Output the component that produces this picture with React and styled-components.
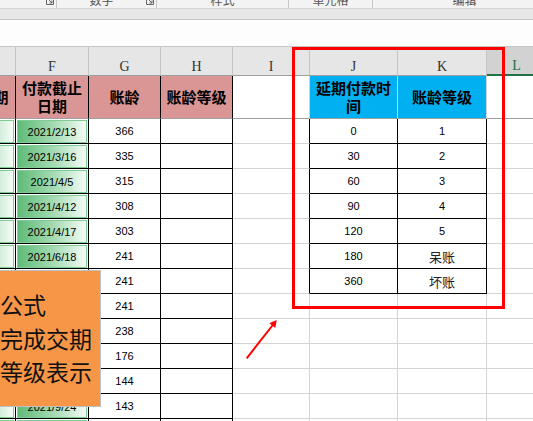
import React from "react";
import styled, { createGlobalStyle } from "styled-components";

const GlobalStyle = createGlobalStyle`
  html, body {
    margin: 0;
    padding: 0;
    background: #fff;
    overflow: hidden;
  }
`;

const GROUPS = [
  { label: "对齐方式", width: 177, launcher: true },
  { label: "数字", width: 100, launcher: true },
  { label: "样式", width: 132 },
  { label: "单元格", width: 84 },
  { label: "编辑", width: 184 },
];

const COLUMNS = [
  { key: "E", width: 74 },
  { key: "F", width: 73 },
  { key: "G", width: 72 },
  { key: "H", width: 72 },
  { key: "I", width: 77 },
  { key: "J", width: 88 },
  { key: "K", width: 89 },
  { key: "L", width: 60 },
];

// rows under the orange note keep no visible date
const ROWS = [
  { date: "2021/2/13", age: 366 },
  { date: "2021/3/16", age: 335 },
  { date: "2021/4/5", age: 315 },
  { date: "2021/4/12", age: 308 },
  { date: "2021/4/17", age: 303 },
  { date: "2021/6/18", age: 241 },
  { date: "", age: 241 },
  { date: "", age: 241 },
  { date: "", age: 238 },
  { date: "", age: 176 },
  { date: "", age: 144 },
  { date: "2021/9/24", age: 143 },
  { date: "2021/9/25", age: 142 },
];

// 延期付款时间 -> 账龄等级
const LEVELS = [
  ["0", "1"],
  ["30", "2"],
  ["60", "3"],
  ["90", "4"],
  ["120", "5"],
  ["180", "呆账"],
  ["360", "坏账"],
];

const BLACK = "#000";
const GRID = "#d4d4d4";
const PINK = "#da9694";
const BLUE = "#00b0f0";

const Page = styled.div`
  position: relative;
  width: 533px;
  height: 421px;
  overflow: hidden;
  background: #fff;
`;

const Ribbon = styled.div`
  display: flex;
  height: 8px;
  margin-left: -120px;
  background: #f3f3f3;
  border-bottom: 1px solid #d6d6d6;
  overflow: hidden;
`;

const Group = styled.div`
  flex: 0 0 ${(p) => p.$width}px;
  box-sizing: border-box;
  display: flex;
  align-items: flex-end;
  border-right: 1px solid #c8c8c8;
`;

const GroupLabel = styled.span`
  flex: 1;
  margin-bottom: 2px;
  text-align: center;
  font: 12px/12px "Noto Sans CJK SC", sans-serif;
  color: #555;
`;

const Launcher = styled.svg`
  flex: 0 0 8px;
  margin: 0 2px 3px 0;
`;

const Strip = styled.div`
  height: 10px;
  background: #e6e6e6;
  border-bottom: 1px solid #c6c6c6;
`;

const FormulaBar = styled.div`
  height: 26px;
  background: #fdfdfd;
  border-bottom: 1px solid #c6c6c6;
`;

const Sheet = styled.div`
  display: grid;
  grid-template-columns: ${COLUMNS.map((c) => `${c.width}px`).join(" ")};
  grid-template-rows: 29px 43px repeat(${ROWS.length}, 25px);
  margin-left: -58px;
`;

const ColHead = styled.div`
  box-sizing: border-box;
  display: flex;
  align-items: flex-end;
  justify-content: center;
  padding-bottom: 1px;
  background: ${(p) => (p.$active ? "#d2d2d2" : "#e6e6e6")};
  border-right: 1px solid #c4c4c4;
  border-bottom: ${(p) => (p.$active ? "2px solid #217346" : "1px solid #9e9e9e")};
  font: 14px/14px "Liberation Serif", serif;
  color: ${(p) => (p.$active ? "#217346" : "#333")};
`;

const Cell = styled.div`
  box-sizing: border-box;
  display: flex;
  align-items: center;
  justify-content: center;
  min-width: 0;
  overflow: hidden;
  background: ${(p) => p.$bg || "#fff"};
  border-right: 1px solid ${(p) => p.$right || GRID};
  border-bottom: 1px solid ${(p) => p.$bottom || GRID};
  font: 11px "Liberation Sans", "Noto Sans CJK SC", sans-serif;
  color: #000;
`;

const HeadText = styled.div`
  text-align: center;
  white-space: nowrap;
  font: 700 15px/18px "Noto Sans CJK SC", sans-serif;
  color: #000;
`;

const DateBar = styled.div`
  flex: 1;
  align-self: stretch;
  display: flex;
  align-items: center;
  justify-content: center;
  margin: 1px 1px 0 1px;
  border: 1px solid #7fcd94;
  background: linear-gradient(to right, #5fbb78, #a9dcb6 55%, #f4fbf6);
  font: 11px "Liberation Sans", sans-serif;
  color: #000;
`;

const Hanzi = styled.span`
  font: 13px "Noto Sans CJK SC", sans-serif;
  color: #222;
`;

const RedFrame = styled.div`
  position: absolute;
  left: 292px;
  top: 47px;
  width: 213px;
  height: 262px;
  box-sizing: border-box;
  border: 3px solid #ff0000;
  pointer-events: none;
`;

const Callout = styled.div`
  position: absolute;
  left: -56px;
  top: 270px;
  width: 157px;
  height: 137px;
  box-sizing: border-box;
  padding: 17px 0 0 9px;
  background: #f79646;
  border: 1px solid #bfbfbf;
  font: 23px/33.5px "Noto Sans CJK SC", sans-serif;
  color: #111;
  white-space: nowrap;
`;

const Arrow = styled.svg`
  position: absolute;
  left: 240px;
  top: 314px;
`;

function HeaderRow() {
  const bottom = "#a0a0a0";
  return (
    <>
      <Cell $bg={PINK} $right={BLACK} $bottom={bottom}>
        <HeadText>开票日期</HeadText>
      </Cell>
      <Cell $bg={PINK} $right={BLACK} $bottom={bottom}>
        <HeadText>
          付款截止
          <br />
          日期
        </HeadText>
      </Cell>
      <Cell $bg={PINK} $right={BLACK} $bottom={bottom}>
        <HeadText>账龄</HeadText>
      </Cell>
      <Cell $bg={PINK} $right={BLACK} $bottom={bottom}>
        <HeadText>账龄等级</HeadText>
      </Cell>
      <Cell $bottom={bottom} />
      <Cell $bg={BLUE} $bottom={bottom}>
        <HeadText>
          延期付款时
          <br />
          间
        </HeadText>
      </Cell>
      <Cell $bg={BLUE} $bottom={bottom}>
        <HeadText>账龄等级</HeadText>
      </Cell>
      <Cell $bottom={bottom} />
    </>
  );
}

function DataRow({ row, index }) {
  const level = LEVELS[index];
  const edge = level ? BLACK : GRID;
  const isHanzi = level && /[^\d]/.test(level[1]);
  return (
    <>
      <Cell $right={BLACK} $bottom={BLACK}>
        <DateBar />
      </Cell>
      <Cell $right={BLACK} $bottom={BLACK}>
        <DateBar>{row.date}</DateBar>
      </Cell>
      <Cell $right={BLACK} $bottom={BLACK}>
        {row.age}
      </Cell>
      <Cell $right={BLACK} $bottom={BLACK} />
      <Cell $right={edge} />
      <Cell $right={edge} $bottom={edge}>
        {level && level[0]}
      </Cell>
      <Cell $right={edge} $bottom={edge}>
        {level && (isHanzi ? <Hanzi>{level[1]}</Hanzi> : level[1])}
      </Cell>
      <Cell />
    </>
  );
}

export default function App() {
  return (
    <Page>
      <GlobalStyle />
      <Ribbon>
        {GROUPS.map((g) => (
          <Group key={g.label} $width={g.width}>
            <GroupLabel>{g.label}</GroupLabel>
            {g.launcher && (
              <Launcher width="8" height="8" viewBox="0 0 8 8">
                <path
                  d="M0.5 0.5V7.5H7.5V0.5M2.5 2.5L6 6M6 3.5V6H3.5"
                  fill="none"
                  stroke="#666"
                  strokeWidth="1"
                />
              </Launcher>
            )}
          </Group>
        ))}
      </Ribbon>
      <Strip />
      <FormulaBar />
      <Sheet>
        {COLUMNS.map((c) => (
          <ColHead key={c.key} $active={c.key === "L"}>
            {c.key}
          </ColHead>
        ))}
        <HeaderRow />
        {ROWS.map((row, i) => (
          <DataRow key={i} row={row} index={i} />
        ))}
      </Sheet>
      <RedFrame />
      <Callout>
        <div>运用公式</div>
        <div>自动完成交期</div>
        <div>账龄等级表示</div>
      </Callout>
      <Arrow width="44" height="50" viewBox="0 0 44 50">
        <line x1="6.7" y1="44.3" x2="34" y2="9.5" stroke="#ff0000" strokeWidth="2" />
        <polygon points="36.7,6 29.4,9.2 35.3,13.9" fill="#ff0000" />
      </Arrow>
    </Page>
  );
}
